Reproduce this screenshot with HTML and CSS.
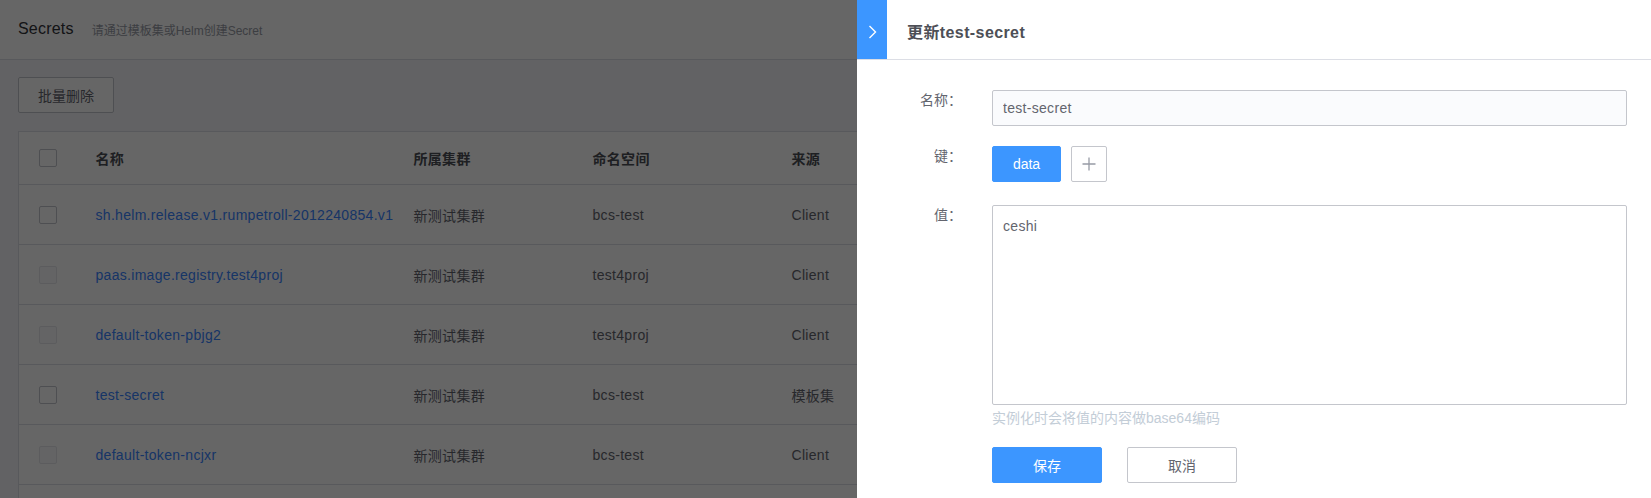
FILE: index.html
```html
<!DOCTYPE html>
<html lang="zh-CN">
<head>
<meta charset="utf-8">
<title>Secrets</title>
<link rel="stylesheet" href="styles.css">
</head>
<body>
<div class="page">
  <header class="page-header">
    <span class="page-title">Secrets</span>
    <span class="page-sub">请通过模板集或Helm创建Secret</span>
  </header>
  <main class="content">
    <div class="toolbar">
      <button class="btn btn-default">批量删除</button>
    </div>
    <table class="table">
      <colgroup>
        <col class="c-check"><col class="c-name"><col class="c-cluster"><col class="c-ns"><col class="c-src"><col>
      </colgroup>
      <thead>
        <tr>
          <th><span class="checkbox"></span></th>
          <th>名称</th>
          <th>所属集群</th>
          <th>命名空间</th>
          <th>来源</th>
          <th></th>
        </tr>
      </thead>
      <tbody>
        <tr>
          <td><span class="checkbox"></span></td>
          <td><a class="link">sh.helm.release.v1.rumpetroll-2012240854.v1</a></td>
          <td>新测试集群</td><td>bcs-test</td><td>Client</td><td></td>
        </tr>
        <tr>
          <td><span class="checkbox disabled"></span></td>
          <td><a class="link">paas.image.registry.test4proj</a></td>
          <td>新测试集群</td><td>test4proj</td><td>Client</td><td></td>
        </tr>
        <tr>
          <td><span class="checkbox disabled"></span></td>
          <td><a class="link">default-token-pbjg2</a></td>
          <td>新测试集群</td><td>test4proj</td><td>Client</td><td></td>
        </tr>
        <tr>
          <td><span class="checkbox"></span></td>
          <td><a class="link">test-secret</a></td>
          <td>新测试集群</td><td>bcs-test</td><td>模板集</td><td></td>
        </tr>
        <tr>
          <td><span class="checkbox disabled"></span></td>
          <td><a class="link">default-token-ncjxr</a></td>
          <td>新测试集群</td><td>bcs-test</td><td>Client</td><td></td>
        </tr>
        <tr class="empty-row">
          <td></td><td></td><td></td><td></td><td></td><td></td>
        </tr>
      </tbody>
    </table>
  </main>
</div>

<div class="mask"></div>

<aside class="panel">
  <div class="panel-header">
    <div class="panel-close">
      <svg width="9" height="14" viewBox="0 0 9 14"><polyline points="1.5,1 7.5,7 1.5,13" fill="none" stroke="#ffffff" stroke-width="1.4"/></svg>
    </div>
    <div class="panel-title">更新test-secret</div>
  </div>
  <form class="form">
    <div class="form-item">
      <label class="form-label">名称：</label>
      <div class="form-content">
        <input class="input" type="text" value="test-secret" readonly>
      </div>
    </div>
    <div class="form-item">
      <label class="form-label">键：</label>
      <div class="form-content keys">
        <button type="button" class="btn btn-primary btn-key">data</button>
        <button type="button" class="btn btn-default btn-add">
          <svg width="14" height="14" viewBox="0 0 14 14"><path d="M7 0.5V13.5M0.5 7H13.5" stroke="#979ba5" stroke-width="1.3" fill="none"/></svg>
        </button>
      </div>
    </div>
    <div class="form-item item-value">
      <label class="form-label">值：</label>
      <div class="form-content">
        <textarea class="textarea">ceshi</textarea>
        <div class="hint">实例化时会将值的内容做base64编码</div>
      </div>
    </div>
    <div class="form-actions">
      <button type="button" class="btn btn-primary btn-action">保存</button>
      <button type="button" class="btn btn-default btn-action">取消</button>
    </div>
  </form>
</aside>
</body>
</html>
```

FILE: styles.css
```css
* { box-sizing: border-box; }
html, body {
  margin: 0;
  padding: 0;
  height: 100%;
  overflow: hidden;
}
body {
  font-family: "Liberation Sans", "Noto Sans CJK SC", sans-serif;
  font-size: 14px;
  color: #63656e;
  background: #f5f6fa;
}

.page { min-height: 100%; }

.page-header {
  height: 60px;
  background: #ffffff;
  border-bottom: 1px solid #dcdee5;
  display: flex;
  align-items: center;
  padding: 0 18px;
  padding-bottom: 2px;
}
.page-title {
  font-size: 16px;
  color: #313238;
  letter-spacing: 0.2px;
}
.page-sub {
  font-size: 12px;
  color: #979ba5;
  margin-left: 18px;
  padding-top: 1px;
}

.content { padding: 17px 18px 0; }
.toolbar { margin-bottom: 18px; display: flex; }

.btn {
  font-family: inherit;
  font-size: 14px;
  height: 36px;
  border-radius: 2px;
  cursor: pointer;
  display: inline-flex;
  align-items: center;
  justify-content: center;
  padding: 0;
}
.btn-default {
  background: #ffffff;
  border: 1px solid #c4c6cc;
  color: #63656e;
}
.btn-primary {
  background: #3c96ff;
  border: 1px solid #3c96ff;
  color: #ffffff;
}
.toolbar .btn { width: 96px; }

.table {
  width: 100%;
  border-collapse: collapse;
  table-layout: fixed;
  background: #ffffff;
  border: 1px solid #dcdee5;
}
.c-check { width: 77px; }
.c-name { width: 318px; }
.c-cluster { width: 179px; }
.c-ns { width: 199px; }
.c-src { width: 200px; }
.table th, .table td {
  padding: 0;
  text-align: left;
  border-bottom: 1px solid #dcdee5;
  white-space: nowrap;
  letter-spacing: 0.3px;
}
.table th {
  height: 53px;
  font-weight: bold;
  color: #4d4f56;
}
.table td { height: 60px; }
.table th:first-child, .table td:first-child { padding-left: 20px; }
.table th:first-child .checkbox, .table td:first-child .checkbox { vertical-align: middle; }

.checkbox {
  display: inline-block;
  width: 18px;
  height: 18px;
  border: 1px solid #c4c6cc;
  border-radius: 2px;
  background: #ffffff;
}
.checkbox.disabled {
  border-color: #e6e7eb;
  background: #fafbfd;
}
.link { color: #3a84ff; text-decoration: none; }

.mask {
  position: fixed;
  inset: 0;
  background: rgba(0, 0, 0, 0.6);
}

.panel {
  position: fixed;
  top: 0;
  bottom: 0;
  right: 0;
  width: 794px;
  background: #ffffff;
  display: flex;
  flex-direction: column;
}
.panel-header {
  height: 60px;
  border-bottom: 1px solid #dcdee5;
  display: flex;
  align-items: stretch;
}
.panel-close {
  width: 30px;
  background: #3c96ff;
  display: flex;
  align-items: center;
  justify-content: center;
  padding-top: 4px;
}
.panel-title {
  display: flex;
  align-items: center;
  padding-left: 20px;
  padding-top: 3px;
  font-size: 16px;
  font-weight: bold;
  color: #4d4f56;
  letter-spacing: 0.4px;
}

.form { padding: 30px 24px 0 0; }
.form-item {
  display: flex;
  margin-bottom: 20px;
}
.item-value { margin-top: 23px; margin-bottom: 0; }
.form-label {
  width: 105px;
  flex: none;
  text-align: right;
  line-height: 20px;
  margin-right: 30px;
  color: #63656e;
}
.form-content { flex: 1; min-width: 0; }

.input {
  width: 100%;
  height: 36px;
  border: 1px solid #c4c6cc;
  border-radius: 2px;
  background: #fafbfd;
  padding: 0 10px;
  font-family: inherit;
  font-size: 14px;
  color: #63656e;
  letter-spacing: 0.3px;
  outline: none;
}
.keys { display: flex; gap: 10px; }
.btn-key { width: 69px; }
.btn-add { width: 36px; }

.textarea {
  display: block;
  width: 100%;
  height: 200px;
  border: 1px solid #c4c6cc;
  border-radius: 2px;
  background: #ffffff;
  padding: 10px 10px;
  font-family: inherit;
  font-size: 14px;
  line-height: 20px;
  color: #63656e;
  letter-spacing: 0.3px;
  resize: none;
  outline: none;
}
.hint {
  line-height: 26px;
  color: #c3cdd7;
  font-size: 14px;
}
.form-actions {
  display: flex;
  gap: 25px;
  padding-left: 135px;
  margin-top: 16px;
}
.btn-action { width: 110px; }
```
